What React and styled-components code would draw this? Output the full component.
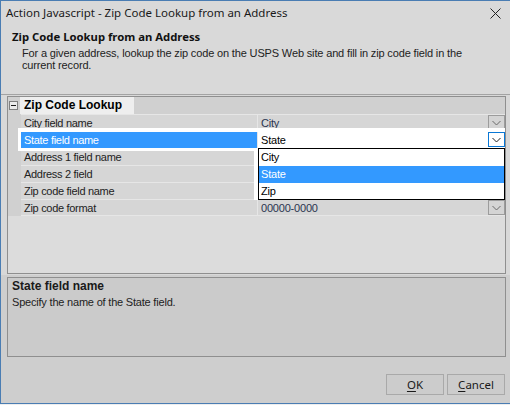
import React from "react";
import styled, { createGlobalStyle } from "styled-components";

const SEGOE = `"Noto Sans", "Open Sans", sans-serif`;
const MSSS = `"Liberation Sans", Arial, sans-serif`;

const Global = createGlobalStyle`
  html, body { margin: 0; padding: 0; background: #eeeeee; }
  body { width: 510px; height: 405px; overflow: hidden; }
  * { box-sizing: border-box; }
`;

const Window = styled.div`
  width: 510px;
  height: 404px;
  border-left: 1px solid #4a7db3;
  border-top: 1px solid #4a7db3;
  border-bottom: 1px solid #4a7db3;
  background: #d9d9d9;
  display: flex;
  flex-direction: column;
  color: #1e1e1e;
`;

const TitleBar = styled.div`
  height: 24px;
  display: flex;
  align-items: center;
  padding-left: 5px;
`;

const TitleText = styled.div`
  flex: 1;
  font-family: ${SEGOE};
  font-size: 11.5px;
  line-height: 24px;
  color: #1a1a1a;
`;

const CloseBox = styled.div`
  width: 30px;
  height: 24px;
  display: flex;
  align-items: center;
  justify-content: center;
`;

const Header = styled.div`
  height: 70px;
  padding: 5px 0 0 11px;
  border-bottom: 1px solid #a3a3a3;
`;

const HeaderTitle = styled.div`
  font-family: ${SEGOE};
  font-weight: 700;
  font-size: 11.3px;
  line-height: 14px;
  color: #111;
`;

const HeaderDesc = styled.div`
  margin: 3px 0 0 10px;
  font-family: ${MSSS};
  font-size: 11px;
  letter-spacing: -0.15px;
  line-height: 12px;
  color: #222;
`;

const Body = styled.div`
  flex: 1;
  display: flex;
  flex-direction: column;
`;

const GridPane = styled.div`
  padding: 1px 4px 1px 6px;
  background: #d8d8d8;
`;

const Grid = styled.div`
  position: relative;
  height: 178px;
  border: 1px solid #8f8f8f;
  background: #dcdcdc;
  overflow: hidden;
  font-family: ${MSSS};
  font-size: 11px;
`;

const CategoryRow = styled.div`
  display: flex;
  height: 17px;
  background: #d0d0d0;
`;

const ToggleArea = styled.div`
  width: 12px;
  display: flex;
  align-items: center;
  padding-left: 1px;
`;

const ToggleBox = styled.div`
  width: 9px;
  height: 9px;
  border: 1px solid #808080;
  background: #ececec;
  display: flex;
  align-items: center;
  justify-content: center;
  &::before {
    content: "";
    width: 5px;
    height: 1px;
    background: #1a1a1a;
  }
`;

const CategoryLabel = styled.div`
  width: 114px;
  padding-left: 4px;
  background: #eeeeee;
  font-weight: 700;
  font-size: 12px;
  line-height: 17px;
  color: #000;
`;

const Row = styled.div`
  display: flex;
  height: 17px;
  position: relative;
  z-index: ${(p) => (p.$selected ? 1 : 0)};
`;

const Margin = styled.div`
  width: 13px;
  background: #d0d0d0;
`;

const Cells = styled.div`
  flex: 1;
  display: flex;
  border-top: 1px solid ${(p) => (p.$selected ? "#ffffff" : "#e6e6e6")};
  border-bottom: ${(p) => (p.$last ? "1px solid #e6e6e6" : "none")};
  box-shadow: ${(p) => (p.$selected ? "0 0 0 3px #ffffff" : "none")};
`;

const LabelCell = styled.div`
  width: 236px;
  padding-left: 3px;
  line-height: 16px;
  letter-spacing: -0.3px;
  background: ${(p) => (p.$selected ? "#3399ff" : "#d6d6d6")};
  color: ${(p) => (p.$selected ? "#ffffff" : "#222")};
  white-space: nowrap;
`;

const Divider = styled.div`
  width: 1px;
  background: #e6e6e6;
`;

const ValueCell = styled.div`
  flex: 1;
  display: flex;
  align-items: flex-start;
  padding-left: 3px;
  background: ${(p) => (p.$selected ? "#ffffff" : "#d6d6d6")};
`;

const ValueText = styled.div`
  flex: 1;
  line-height: 16px;
  letter-spacing: -0.2px;
  color: ${(p) => (p.$selected ? "#000" : "#2a3550")};
`;

const DropButton = styled.div`
  width: 17px;
  height: 15px;
  border: 1px solid ${(p) => (p.$focused ? "#0a78d6" : "#9c9c9c")};
  background: ${(p) => (p.$focused ? "#ffffff" : "#d4d4d4")};
  display: flex;
  align-items: center;
  justify-content: center;
`;

const DropList = styled.div`
  position: absolute;
  top: 51px;
  left: 250px;
  width: 247px;
  height: 52px;
  border: 1px solid #000;
  background: #fff;
  z-index: 2;
  overflow: hidden;
  box-shadow: -4px 0 0 #ffffff;
`;

const DropItem = styled.div`
  height: 17px;
  padding-left: 2px;
  line-height: 16px;
  letter-spacing: -0.2px;
  background: ${(p) => (p.$selected ? "#3399ff" : "#ffffff")};
  color: ${(p) => (p.$selected ? "#ffffff" : "#000")};
`;

const LowerPane = styled.div`
  flex: 1;
  display: flex;
  flex-direction: column;
  padding: 2px 4px 0 6px;
  background: #cecece;
`;

const DescPanel = styled.div`
  height: 80px;
  border: 1px solid #8f8f8f;
  background: #cbcbcb;
  padding: 1px 0 0 4px;
  font-family: ${MSSS};
`;

const DescTitle = styled.div`
  font-weight: 700;
  font-size: 12px;
  line-height: 15px;
  color: #1a1a1a;
`;

const DescText = styled.div`
  margin-top: 2px;
  font-size: 11px;
  line-height: 13px;
  letter-spacing: -0.2px;
  color: #222;
`;

const ButtonBar = styled.div`
  margin-top: 17px;
  display: flex;
  justify-content: flex-end;
  gap: 3px;
  padding-right: 1px;
`;

const Button = styled.div`
  width: 58px;
  height: 21px;
  border: 1px solid #a9a9a9;
  background: #cccccc;
  display: flex;
  align-items: center;
  justify-content: center;
  font-family: ${SEGOE};
  font-size: 11.5px;
  color: #1a1a1a;
  u { text-decoration: underline; text-underline-offset: 2px; }
`;

const Chevron = ({ color }) => (
  <svg width="9" height="6" viewBox="0 0 9 6">
    <path d="M0.5 1 L4.5 5 L8.5 1" fill="none" stroke={color} strokeWidth="1" />
  </svg>
);

const CloseIcon = () => (
  <svg width="11" height="11" viewBox="0 0 11 11">
    <path d="M0.5 0.5 L10.5 10.5 M10.5 0.5 L0.5 10.5" stroke="#222" strokeWidth="1" />
  </svg>
);

const rows = [
  { label: "City field name", value: "City", button: true },
  { label: "State field name", value: "State", button: true, selected: true },
  { label: "Address 1 field name", value: "" },
  { label: "Address 2 field", value: "" },
  { label: "Zip code field name", value: "" },
  { label: "Zip code format", value: "00000-0000", button: true },
];

export default function App() {
  return (
    <>
      <Global />
      <Window>
        <TitleBar>
          <TitleText>Action Javascript - Zip Code Lookup from an Address</TitleText>
          <CloseBox>
            <CloseIcon />
          </CloseBox>
        </TitleBar>
        <Header>
          <HeaderTitle>Zip Code Lookup from an Address</HeaderTitle>
          <HeaderDesc>
            For a given address, lookup the zip code on the USPS Web site and fill in zip code field in the
            <br />
            current record.
          </HeaderDesc>
        </Header>
        <Body>
          <GridPane>
            <Grid>
              <CategoryRow>
                <ToggleArea>
                  <ToggleBox />
                </ToggleArea>
                <CategoryLabel>Zip Code Lookup</CategoryLabel>
              </CategoryRow>
              {rows.map((r, i) => (
                <Row key={r.label} $selected={r.selected}>
                  <Margin />
                  <Cells $selected={r.selected} $last={i === rows.length - 1}>
                    <LabelCell $selected={r.selected}>{r.label}</LabelCell>
                    <Divider />
                    <ValueCell $selected={r.selected}>
                      <ValueText $selected={r.selected}>{r.value}</ValueText>
                      {r.button && (
                        <DropButton $focused={r.selected}>
                          <Chevron color={r.selected ? "#222" : "#6a6a6a"} />
                        </DropButton>
                      )}
                    </ValueCell>
                  </Cells>
                </Row>
              ))}
              <DropList>
                <DropItem>City</DropItem>
                <DropItem $selected>State</DropItem>
                <DropItem>Zip</DropItem>
              </DropList>
            </Grid>
          </GridPane>
          <LowerPane>
            <DescPanel>
              <DescTitle>State field name</DescTitle>
              <DescText>Specify the name of the State field.</DescText>
            </DescPanel>
            <ButtonBar>
              <Button>
                <span><u>O</u>K</span>
              </Button>
              <Button>
                <span><u>C</u>ancel</span>
              </Button>
            </ButtonBar>
          </LowerPane>
        </Body>
      </Window>
    </>
  );
}
